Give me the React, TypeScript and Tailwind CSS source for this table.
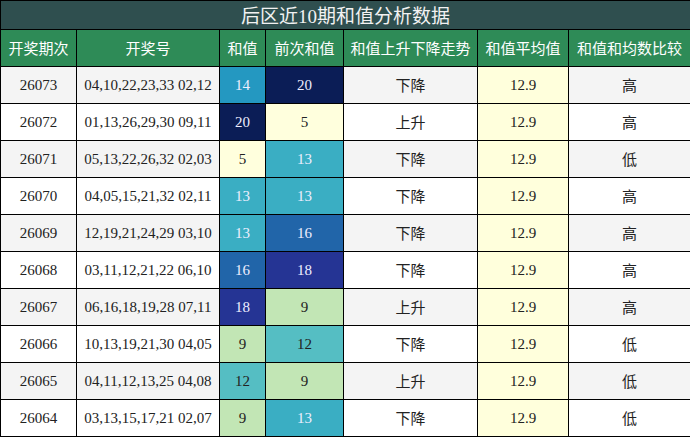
const rows = [
  { q: "26073", n: "04,10,22,23,33 02,12", s: 14, p: 20, t: "下降", c: "高" },
  { q: "26072", n: "01,13,26,29,30 09,11", s: 20, p: 5, t: "上升", c: "高" },
  { q: "26071", n: "05,13,22,26,32 02,03", s: 5, p: 13, t: "下降", c: "低" },
  { q: "26070", n: "04,05,15,21,32 02,11", s: 13, p: 13, t: "下降", c: "高" },
  { q: "26069", n: "12,19,21,24,29 03,10", s: 13, p: 16, t: "下降", c: "高" },
  { q: "26068", n: "03,11,12,21,22 06,10", s: 16, p: 18, t: "下降", c: "高" },
  { q: "26067", n: "06,16,18,19,28 07,11", s: 18, p: 9, t: "上升", c: "高" },
  { q: "26066", n: "10,13,19,21,30 04,05", s: 9, p: 12, t: "下降", c: "低" },
  { q: "26065", n: "04,11,12,13,25 04,08", s: 12, p: 9, t: "上升", c: "低" },
  { q: "26064", n: "03,13,15,17,21 02,07", s: 9, p: 13, t: "下降", c: "低" },
];

const heat: Record<number, string> = {
  5: "bg-[#ffffdd] text-[#222]",
  9: "bg-[#c2e6b5] text-[#222]",
  12: "bg-[#55bec3] text-[#222]",
  13: "bg-[#3aaec3] text-[#eef]",
  14: "bg-[#2498c1] text-[#eef]",
  16: "bg-[#2165a9] text-[#eef]",
  18: "bg-[#253494] text-[#eef]",
  20: "bg-[#0b1d56] text-[#eef]",
};

const cjk = "font-['Noto_Sans_CJK_SC','Noto_Sans',sans-serif]";
const serif = "font-['Liberation_Serif','Noto_Sans_CJK_SC',serif]";

export default function App() {
  const heads = ["开奖期次", "开奖号", "和值", "前次和值", "和值上升下降走势", "和值平均值", "和值和均数比较"];
  return (
    <div className="w-[690px] h-[437px] overflow-hidden bg-white">
      <table className="w-[690px] table-fixed border-collapse border border-black">
        <colgroup>
          <col className="w-[76px]" />
          <col className="w-[143px]" />
          <col className="w-[46px]" />
          <col className="w-[78px]" />
          <col className="w-[134px]" />
          <col className="w-[91px]" />
          <col className="w-[122px]" />
        </colgroup>
        <thead>
          <tr className="h-[29px]">
            <th colSpan={7} className={`bg-[#2f4f4f] border border-black text-[#f2f2f2] text-[19px] font-normal leading-none ${cjk}`}>
              后区近<span className={serif}>10</span>期和值分析数据
            </th>
          </tr>
          <tr className="h-[37px]">
            {heads.map((h) => (
              <th key={h} className={`bg-[#2e8b57] border border-black text-white text-[15px] font-normal ${cjk}`}>
                {h}
              </th>
            ))}
          </tr>
        </thead>
        <tbody>
          {rows.map((r, i) => (
            <tr key={r.q} className={`h-[37px] ${i % 2 === 0 ? "bg-[#f4f4f4]" : "bg-white"}`}>
              <td className={`border border-black text-center text-[15px] text-[#222] ${serif}`}>{r.q}</td>
              <td className={`border border-black text-center text-[15px] text-[#222] whitespace-nowrap ${serif}`}>{r.n}</td>
              <td className={`border border-black text-center text-[15px] ${heat[r.s]} ${serif}`}>{r.s}</td>
              <td className={`border border-black text-center text-[15px] ${heat[r.p]} ${serif}`}>{r.p}</td>
              <td className={`border border-black text-center text-[15px] text-[#222] ${cjk}`}>{r.t}</td>
              <td className={`border border-black text-center text-[15px] text-[#222] bg-[#ffffdc] ${serif}`}>12.9</td>
              <td className={`border border-black text-center text-[15px] text-[#222] ${cjk}`}>{r.c}</td>
            </tr>
          ))}
        </tbody>
      </table>
    </div>
  );
}
